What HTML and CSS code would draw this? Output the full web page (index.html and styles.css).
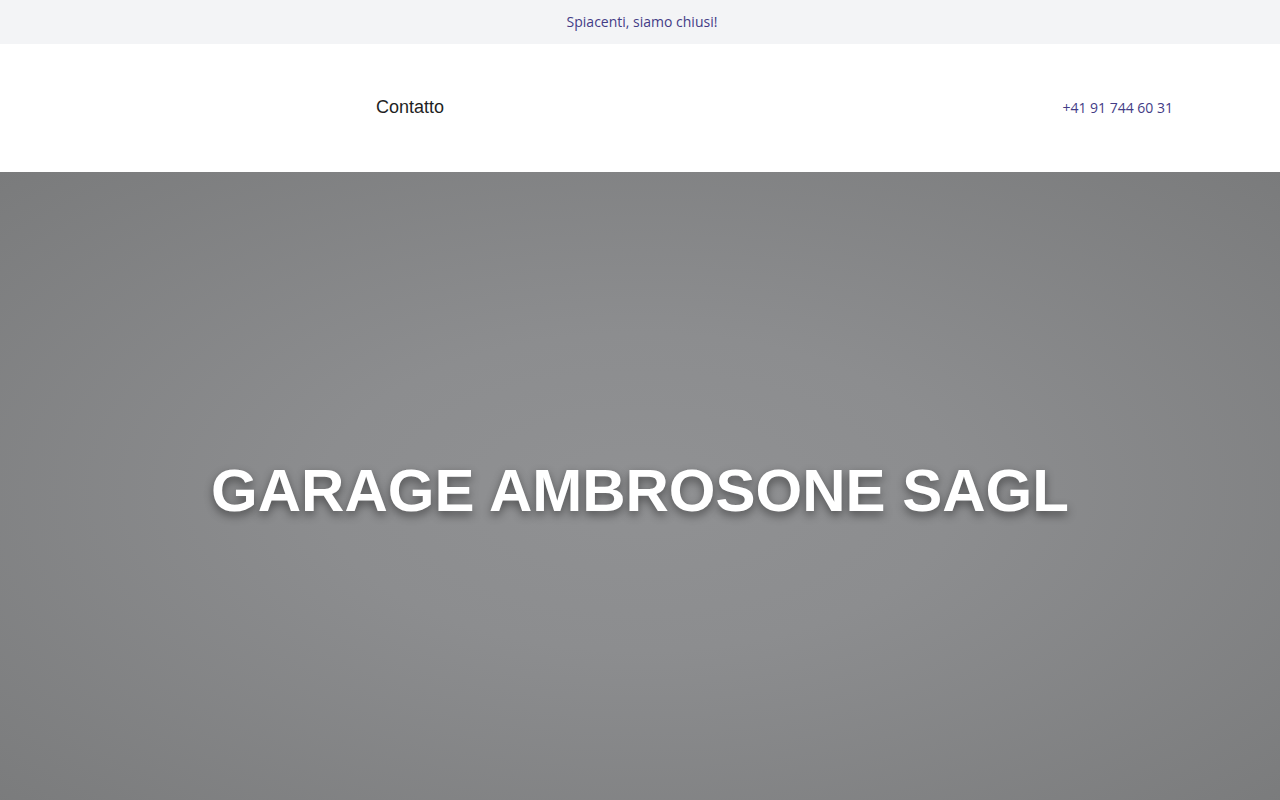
FILE: index.html
```html
<!DOCTYPE html>
<html lang="it">
<head>
<meta charset="utf-8">
<title>Garage Ambrosone Sagl</title>
<link rel="stylesheet" href="styles.css">
</head>
<body>
<div class="notice"><span class="notice-text">Spiacenti, siamo chiusi!</span></div>
<header class="header">
  <div class="header-inner">
    <div class="logo"></div>
    <nav class="nav"><a class="nav-link" href="#">Contatto</a></nav>
    <a class="phone" href="#">+41 91 744 60 31</a>
  </div>
</header>
<section class="hero">
  <h1 class="hero-title">GARAGE AMBROSONE SAGL</h1>
</section>
</body>
</html>
```
FILE: styles.css
```css
html, body { margin: 0; padding: 0; }
body { font-family: "Open Sans", "Liberation Sans", sans-serif; background: #fff; overflow: hidden; }
.notice {
  height: 44px;
  background: #f3f4f6;
  color: #433c86;
  font-size: 14px;
  display: flex;
  align-items: center;
  justify-content: center;
  padding-left: 4px;
  box-sizing: border-box;
}
.notice-text { position: relative; top: -1px; }
.header { height: 128px; background: #fff; }
.header-inner {
  height: 100%;
  display: flex;
  align-items: center;
  padding: 0 107px;
}
.logo { width: 269px; }
.nav { flex: 1; }
.nav-link {
  font-family: "Liberation Sans", Arial, sans-serif;
  font-size: 18px;
  color: #1f1f24;
  text-decoration: none;
  position: relative;
  top: -1px;
}
.phone {
  font-size: 14px;
  color: #433c86;
  text-decoration: none;
  position: relative;
  top: -1px;
}
.hero {
  height: 640px;
  background: radial-gradient(ellipse at 50% 50%, #909193 0%, #8c8d8f 35%, #7a7b7c 100%);
  display: flex;
  align-items: center;
  justify-content: center;
}
.hero-title {
  margin: 0;
  font-family: "Liberation Sans", Arial, sans-serif;
  font-weight: 700;
  font-size: 60px;
  color: #fff;
  text-shadow: 0 4px 10px rgba(0,0,0,0.45);
  position: relative;
  top: -2px;
}
```
